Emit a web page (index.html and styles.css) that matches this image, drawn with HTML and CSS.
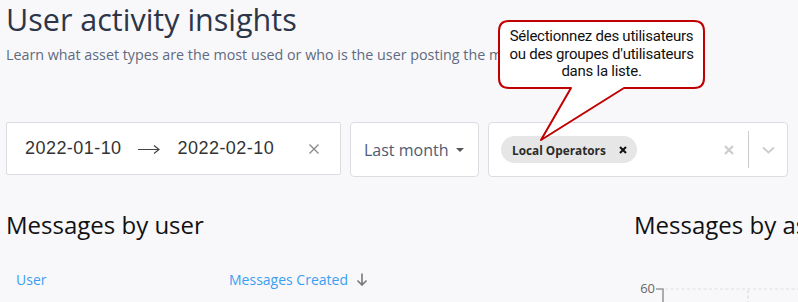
FILE: index.html
```html
<!DOCTYPE html>
<html lang="en">
<head>
    <meta charset="UTF-8">
    <meta name="viewport" content="width=device-width, initial-scale=1.0">
    <title>User activity insights</title>
    <link rel="stylesheet" href="styles.css">
</head>
<body>
    <div class="page">
        <h1 class="title">User activity insights</h1>
        <p class="subtitle">Learn what asset types are the most used or who is the user posting the most messages.</p>

        <div class="filters">
            <div class="date-range">
                <span class="date">2022-01-10</span>
                <svg class="range-arrow" width="22" height="10" viewBox="0 0 22 10">
                    <path d="M0 5.5H21M16 1.5L21 5.5L16 9.5" fill="none" stroke="#444" stroke-width="1.2"/>
                </svg>
                <span class="date">2022-02-10</span>
                <svg class="date-clear" width="12" height="12" viewBox="0 0 12 12">
                    <path d="M1.5 1.5L10.5 10.5M10.5 1.5L1.5 10.5" stroke="#888" stroke-width="1.3"/>
                </svg>
            </div>
            <div class="period">
                <span>Last month</span>
                <span class="caret"></span>
            </div>
            <div class="user-select">
                <div class="tag">
                    <span>Local Operators</span>
                    <svg width="8" height="8" viewBox="0 0 8 8">
                        <path d="M1 1L7 7M7 1L1 7" stroke="#111" stroke-width="2"/>
                    </svg>
                </div>
                <div class="select-tools">
                    <svg width="10" height="10" viewBox="0 0 10 10">
                        <path d="M1 1L9 9M9 1L1 9" stroke="#ccc" stroke-width="2.2"/>
                    </svg>
                    <span class="separator"></span>
                    <svg width="13" height="8" viewBox="0 0 13 8">
                        <path d="M1 1.5L6.5 6.5L12 1.5" fill="none" stroke="#ccc" stroke-width="1.8"/>
                    </svg>
                </div>
            </div>
        </div>

        <div class="sections">
            <div class="panel panel-users">
                <h2>Messages by user</h2>
                <div class="table-head">
                    <span class="col-user">User</span>
                    <span class="col-count">Messages Created
                        <svg width="12" height="13" viewBox="0 0 12 13">
                            <path d="M6 0.5V12M1.5 7.5L6 12L10.5 7.5" fill="none" stroke="#777" stroke-width="1.6"/>
                        </svg>
                    </span>
                </div>
            </div>
            <div class="panel panel-assets">
                <h2>Messages by asset type</h2>
                <svg class="chart" width="170" height="27" viewBox="0 0 170 27">
                    <text x="21" y="18" text-anchor="end">60</text>
                    <path d="M22 14H29V27" fill="none" stroke="#999" stroke-width="1.6"/>
                    <path d="M31 14H170M114 15V27" fill="none" stroke="#ddd" stroke-width="1.2" stroke-dasharray="3 2.5"/>
                </svg>
            </div>
        </div>

        <div class="callout">
            <svg class="callout-shape" width="208" height="122" viewBox="0 0 208 122">
                <path d="M11 1H196Q206 1 206 11V58Q206 68 196 68H126L43 120L73 68H11Q1 68 1 58V11Q1 1 11 1Z" fill="#fff" stroke="#c00000" stroke-width="2" stroke-linejoin="round"/>
            </svg>
            <div class="callout-text">Sélectionnez des utilisateurs<br>ou des groupes d'utilisateurs<br>dans la liste.</div>
        </div>
    </div>
</body>
</html>
```

FILE: styles.css
```css
body {
    margin: 0;
    background: #f8f8fb;
    font-family: "Open Sans", sans-serif;
    overflow: hidden;
}
.page {
    position: relative;
    padding: 0 6px;
    height: 302px;
    overflow: hidden;
}
.title {
    margin: 0;
    font-size: 30.5px;
    line-height: 40px;
    font-weight: 400;
    color: #2c3648;
    margin-top: -1px;
}
.subtitle {
    margin: 6px 0 0;
    font-size: 14.3px;
    line-height: 20px;
    color: #5f6a80;
    white-space: nowrap;
}
.filters {
    display: flex;
    align-items: flex-start;
    gap: 9px;
    margin-top: 57px;
}
.date-range {
    width: 335px;
    height: 53px;
    box-sizing: border-box;
    display: flex;
    align-items: center;
    padding: 0 0 0 18px;
    background: #fff;
    border: 1px solid #dcdde2;
    border-radius: 2px;
    font-family: "Liberation Sans", Arial, sans-serif;
    font-size: 18px;
    color: #333;
}
.date {
    letter-spacing: 0.45px;
}
.range-arrow {
    margin: 0 18px 0 16px;
}
.date-clear {
    margin-left: 34px;
}
.period {
    width: 129px;
    height: 55px;
    box-sizing: border-box;
    display: flex;
    align-items: center;
    justify-content: space-between;
    padding: 0 14px 0 13px;
    background: #fff;
    border: 1px solid #dcdde2;
    border-radius: 4px;
    font-size: 16px;
    color: #4f5a73;
}
.caret {
    width: 0;
    height: 0;
    border-left: 4.5px solid transparent;
    border-right: 4.5px solid transparent;
    border-top: 4.5px solid #555;
    margin-top: 1px;
}
.user-select {
    flex: 1;
    height: 55px;
    box-sizing: border-box;
    display: flex;
    align-items: center;
    justify-content: space-between;
    padding: 0 12px 0 12px;
    background: #fff;
    border: 1px solid #dcdde2;
    border-radius: 4px;
    margin-right: 4px;
}
.tag {
    display: flex;
    align-items: center;
    height: 27px;
    padding: 0 10px 0 11px;
    gap: 13px;
    background: #e6e6e6;
    border-radius: 14px;
    font-size: 11.8px;
    font-weight: 700;
    color: #2a2a2a;
}
.select-tools {
    display: flex;
    align-items: center;
}
.separator {
    width: 1px;
    height: 37px;
    background: #ccc;
    margin: 0 13px 0 14px;
}
.sections {
    display: flex;
    margin-top: 33px;
}
.panel h2 {
    margin: 0;
    font-size: 24px;
    line-height: 30px;
    font-weight: 400;
    color: #111;
    white-space: nowrap;
}
.panel-users {
    width: 628px;
    flex-shrink: 0;
}
.panel-assets {
    flex: 1;
    min-width: 0;
}
.table-head {
    display: flex;
    margin-top: 30px;
    padding-left: 10px;
    font-size: 14px;
    line-height: 20px;
    color: #3a9ff0;
}
.col-user {
    width: 213px;
}
.col-count svg {
    margin-left: 4px;
    vertical-align: -1px;
}
.chart {
    display: block;
    margin-top: 35px;
}
.chart text {
    font-family: "Open Sans", sans-serif;
    font-size: 13px;
    fill: #666;
}
.callout {
    position: absolute;
    left: 498px;
    top: 20px;
    width: 208px;
    height: 122px;
}
.callout-shape {
    position: absolute;
    left: 0;
    top: 0;
}
.callout-text {
    position: absolute;
    left: 0;
    top: 8px;
    width: 207px;
    text-align: center;
    font-family: Roboto, sans-serif;
    font-size: 15px;
    line-height: 17.5px;
    letter-spacing: -0.25px;
    color: #111;
}
```
